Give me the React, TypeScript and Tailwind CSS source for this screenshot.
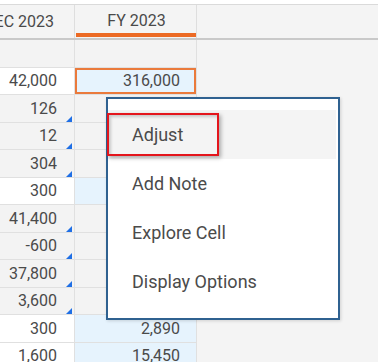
import React from "react";

type Row = {
  left: string;
  leftTone: "gray" | "white";
  mark?: boolean;
  fy?: string;
  fyTone: "gray" | "blue";
  selected?: boolean;
  h: string;
};

const rows: Row[] = [
  { left: "", leftTone: "gray", fyTone: "gray", h: "h-[28px]" },
  { left: "42,000", leftTone: "white", fy: "316,000", fyTone: "blue", selected: true, h: "h-[27px]" },
  { left: "126", leftTone: "gray", mark: true, fyTone: "gray", h: "h-[28px]" },
  { left: "12", leftTone: "gray", mark: true, fyTone: "gray", h: "h-[27px]" },
  { left: "304", leftTone: "gray", mark: true, fyTone: "gray", h: "h-[28px]" },
  { left: "300", leftTone: "white", fyTone: "blue", h: "h-[27px]" },
  { left: "41,400", leftTone: "gray", mark: true, fyTone: "gray", h: "h-[28px]" },
  { left: "-600", leftTone: "gray", mark: true, fyTone: "gray", h: "h-[27px]" },
  { left: "37,800", leftTone: "gray", mark: true, fyTone: "gray", h: "h-[28px]" },
  { left: "3,600", leftTone: "gray", mark: true, fyTone: "gray", h: "h-[27px]" },
  { left: "300", leftTone: "white", fy: "2,890", fyTone: "blue", h: "h-[28px]" },
  { left: "1,600", leftTone: "white", fy: "15,450", fyTone: "blue", h: "h-[27px]" },
];

const menuItems = ["Adjust", "Add Note", "Explore Cell", "Display Options"];

const Marker = () => (
  <svg className="absolute right-[2px] bottom-0" width="6" height="6" viewBox="0 0 6 6">
    <polygon points="6,0 6,6 0,6" fill="#1f6fe5" />
  </svg>
);

const App = () => {
  return (
    <div
      className="relative w-[378px] h-[362px] overflow-hidden bg-[#f4f4f4] text-[#4a4a4a]"
      style={{ fontFamily: "Roboto, 'Liberation Sans', sans-serif" }}
    >
      {/* top strip */}
      <div className="h-[4px] bg-white" />
      <div className="h-[1px] bg-[#dadada]" />

      {/* header */}
      <div className="flex h-[35px] border-b-2 border-[#c9c9c9] text-[16px]">
        <div className="w-[75px] shrink-0 flex items-center justify-end pr-[20px] overflow-hidden whitespace-nowrap border-r border-[#dedede]">
          DEC 2023
        </div>
        <div className="relative w-[122px] shrink-0 flex items-center justify-center border-r border-[#dedede]">
          <span className="-mt-[1px] pl-[2px]">FY 2023</span>
          <div className="absolute left-[1px] right-0 bottom-[1px] h-[4px] bg-[#ec6a24]" />
        </div>
        <div className="flex-1" />
      </div>

      {/* body */}
      <div className="flex flex-col text-[16px]">
        {rows.map((r, i) => (
          <div key={i} className={`flex ${r.h}`}>
            <div
              className={`relative w-[75px] shrink-0 flex items-center justify-end pr-[17px] border-r border-b border-[#e0e0e0] ${
                r.leftTone === "white" ? "bg-white" : "bg-[#f3f3f3]"
              }`}
            >
              {r.left}
              {r.mark && <Marker />}
            </div>
            <div
              className={`w-[122px] shrink-0 flex items-center justify-end border-r border-b border-[#e0e0e0] ${
                r.fyTone === "blue" ? "bg-[#e6f3fd]" : "bg-[#f3f3f3]"
              }`}
            >
              {r.selected ? (
                <div className="w-full h-full flex items-center justify-end pr-[14px] border-2 border-[#ea7a3c] bg-[#e6f3fd]">
                  {r.fy}
                </div>
              ) : (
                <span className="pr-[16px]">{r.fy}</span>
              )}
            </div>
            <div className="flex-1" />
          </div>
        ))}
      </div>

      {/* context menu */}
      <div className="absolute left-[106px] top-[97px] w-[234px] h-[223px] bg-white border-2 border-[#2f6190] shadow-[1px_1px_3px_rgba(0,0,0,0.15)] pt-[11px] text-[18px] text-[#4b4b4b]">
        {menuItems.map((item, i) => (
          <div
            key={item}
            className={`h-[49px] flex items-center pl-[24px] mr-[2px] ${i === 0 ? "bg-[#f4f4f4]" : ""}`}
          >
            {item}
          </div>
        ))}
        <div className="absolute -left-[1px] top-[14px] w-[112px] h-[43px] border-2 border-[#e4151c] shadow-[inset_2px_2px_3px_rgba(0,0,0,0.18),2px_2px_4px_rgba(0,0,0,0.3)]" />
      </div>
    </div>
  );
};

export default App;
